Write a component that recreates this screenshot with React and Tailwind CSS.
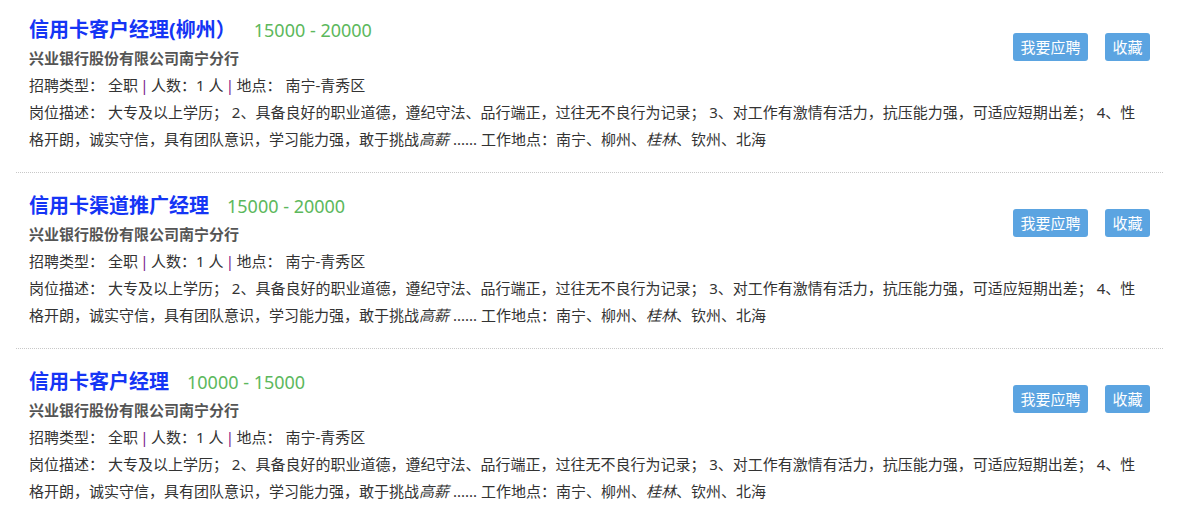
import React from 'react';

const jobs = [
  { title: '信用卡客户经理(柳州）', salary: '15000 - 20000' },
  { title: '信用卡渠道推广经理', salary: '15000 - 20000' },
  { title: '信用卡客户经理', salary: '10000 - 15000' },
];

const Pipe = () => <span className="text-[#7a1a8a] mx-[-1.5px]">|</span>;

// One job posting row
const JobItem = ({ job }) => (
  <div className="px-[13px] pt-[18px] first:pt-[15px] pb-[19px] border-b border-dotted border-[#c8c8c8]">
    <div className="flex justify-between items-start">
      <div>
        <div className="flex items-center h-[30px]">
          <a href="#" className="text-[20px] font-bold text-[#1535f5] leading-[30px]">{job.title}</a>
          <span className="ml-[18px] text-[18px] text-[#5cb85c] leading-[30px]">{job.salary}</span>
        </div>
        <div className="text-[15px] font-bold text-[#555] leading-[27px]">兴业银行股份有限公司南宁分行</div>
      </div>
      <div className="flex gap-[17px] pt-[18px]">
        <button className="h-[28px] px-[7.5px] rounded-[3px] bg-[#5ba4e1] text-white text-[15px] leading-[28px]">我要应聘</button>
        <button className="h-[28px] px-[7.5px] rounded-[3px] bg-[#5ba4e1] text-white text-[15px] leading-[28px]">收藏</button>
      </div>
    </div>
    <div className="text-[15px] text-[#333] leading-[27px]">
      招聘类型： 全职 <Pipe /> 人数：1 人 <Pipe /> 地点： 南宁-青秀区
    </div>
    <p className="text-[15px] text-[#333] leading-[27px]">
      岗位描述： 大专及以上学历； 2、具备良好的职业道德，遵纪守法、品行端正，过往无不良行为记录； 3、对工作有激情有活力，抗压能力强，可适应短期出差； 4、性格开朗，诚实守信，具有团队意识，学习能力强，敢于挑战<em>高薪</em> ...... 工作地点：南宁、柳州、<em>桂林</em>、钦州、北海
    </p>
  </div>
);

export default function App() {
  return (
    <div
      className="bg-white min-h-screen"
      style={{ fontFamily: '"Noto Sans", "Noto Sans CJK SC", sans-serif' }}
    >
      <div className="mx-[16px] w-[1147px]">
        {jobs.map((job, i) => (
          <JobItem key={i} job={job} />
        ))}
      </div>
    </div>
  );
}
